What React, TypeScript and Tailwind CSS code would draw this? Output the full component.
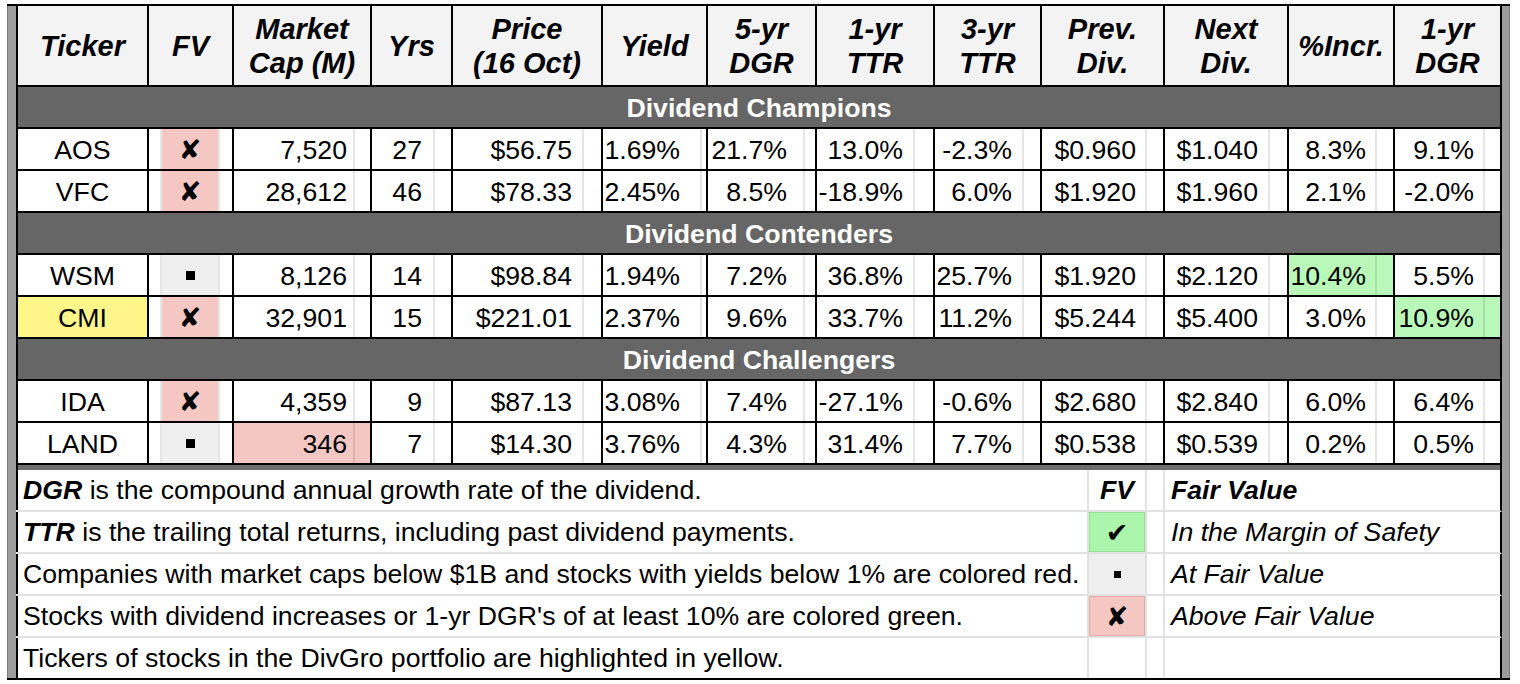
import React from "react";

type Tone = "pink" | "gray" | "green" | "yellow" | "none";

const TONE: Record<Tone, string> = {
  pink: "bg-[#f4c7c3]",
  gray: "bg-[#efefef]",
  green: "bg-[#b9f8b9]",
  yellow: "bg-[#fff68a]",
  none: "bg-white",
};

const GRID =
  "grid grid-cols-[131px_85px_138px_81px_150px_105px_109px_118px_107px_123px_124px_106px_107px]";

const HEADERS: string[][] = [
  ["Ticker"],
  ["FV"],
  ["Market", "Cap (M)"],
  ["Yrs"],
  ["Price", "(16 Oct)"],
  ["Yield"],
  ["5-yr", "DGR"],
  ["1-yr", "TTR"],
  ["3-yr", "TTR"],
  ["Prev.", "Div."],
  ["Next", "Div."],
  ["%Incr."],
  ["1-yr", "DGR"],
];

// trailing grid column + text padding for each number column
const NUM = [
  { tail: "w-[15px]", pr: "pr-[6px]" },
  { tail: "w-[16px]", pr: "pr-[11px]" },
  { tail: "w-[17px]", pr: "pr-[10px]" },
  { tail: "w-[4px]", pr: "pr-[20px]" },
  { tail: "w-[10px]", pr: "pr-[16px]" },
  { tail: "w-[18px]", pr: "pr-[10px]" },
  { tail: "w-[16px]", pr: "pr-[10px]" },
  { tail: "w-[16px]", pr: "pr-[9px]" },
  { tail: "w-[17px]", pr: "pr-[10px]" },
  { tail: "w-[16px]", pr: "pr-[9px]" },
  { tail: "w-[15px]", pr: "pr-[9px]" },
];

type Fv = "x" | "sq" | "check";

type Stock = {
  ticker: string;
  yellow?: boolean;
  fv: Fv;
  values: string[];
  tones?: Record<number, Tone>;
};

const SECTIONS: { title: string; rows: Stock[] }[] = [
  {
    title: "Dividend Champions",
    rows: [
      {
        ticker: "AOS",
        fv: "x",
        values: ["7,520", "27", "$56.75", "1.69%", "21.7%", "13.0%", "-2.3%", "$0.960", "$1.040", "8.3%", "9.1%"],
      },
      {
        ticker: "VFC",
        fv: "x",
        values: ["28,612", "46", "$78.33", "2.45%", "8.5%", "-18.9%", "6.0%", "$1.920", "$1.960", "2.1%", "-2.0%"],
      },
    ],
  },
  {
    title: "Dividend Contenders",
    rows: [
      {
        ticker: "WSM",
        fv: "sq",
        values: ["8,126", "14", "$98.84", "1.94%", "7.2%", "36.8%", "25.7%", "$1.920", "$2.120", "10.4%", "5.5%"],
        tones: { 9: "green" },
      },
      {
        ticker: "CMI",
        yellow: true,
        fv: "x",
        values: ["32,901", "15", "$221.01", "2.37%", "9.6%", "33.7%", "11.2%", "$5.244", "$5.400", "3.0%", "10.9%"],
        tones: { 10: "green" },
      },
    ],
  },
  {
    title: "Dividend Challengers",
    rows: [
      {
        ticker: "IDA",
        fv: "x",
        values: ["4,359", "9", "$87.13", "3.08%", "7.4%", "-27.1%", "-0.6%", "$2.680", "$2.840", "6.0%", "6.4%"],
      },
      {
        ticker: "LAND",
        fv: "sq",
        values: ["346", "7", "$14.30", "3.76%", "4.3%", "31.4%", "7.7%", "$0.538", "$0.539", "0.2%", "0.5%"],
        tones: { 0: "pink" },
      },
    ],
  },
];

function Mark({ kind, small }: { kind: Fv; small?: boolean }) {
  if (kind === "sq")
    return <span className={small ? "inline-block w-[7px] h-[7px] bg-black" : "inline-block w-[9px] h-[9px] bg-black"} />;
  return (
    <span className="font-['DejaVu_Sans',sans-serif] text-[27px] leading-none text-black">
      {kind === "x" ? "\u2718" : "\u2714"}
    </span>
  );
}

function Gridline() {
  return <div className="w-[2px] h-full bg-black/10" />;
}

function DataRow({ row }: { row: Stock }) {
  const fvTone: Tone = row.fv === "x" ? "pink" : "gray";
  return (
    <div className={`${GRID} h-[42px] border-r-2 border-b-2 border-black`}>
      <div
        className={`border-l-2 border-black flex items-center justify-center pt-[2px] ${row.yellow ? TONE.yellow : ""}`}
      >
        {row.ticker}
      </div>
      <div className="border-l-2 border-black flex">
        <div className="w-[11px]" />
        <Gridline />
        <div className={`w-[56px] flex items-center justify-center ${TONE[fvTone]}`}>
          <Mark kind={row.fv} />
        </div>
        <Gridline />
        <div className="flex-1" />
      </div>
      {row.values.map((v, i) => {
        const tone = row.tones?.[i] ?? "none";
        return (
          <div key={i} className={`border-l-2 border-black flex ${TONE[tone]}`}>
            <div className={`flex-1 flex items-center justify-end pt-[2px] ${NUM[i].pr}`}>{v}</div>
            <Gridline />
            <div className={NUM[i].tail} />
          </div>
        );
      })}
    </div>
  );
}

function Band({ title }: { title: string }) {
  return (
    <div className="h-[42px] pt-[2px] border-x-2 border-b-2 border-black bg-[#666666] flex items-center justify-center font-bold text-white">
      {title}
    </div>
  );
}

const NOTES = [
  {
    left: (
      <span>
        <b className="italic">DGR</b> is the compound annual growth rate of the dividend.
      </span>
    ),
    fv: "head",
    desc: "Fair Value",
  },
  {
    left: (
      <span>
        <b className="italic">TTR</b> is the trailing total returns, including past dividend payments.
      </span>
    ),
    fv: "check",
    desc: "In the Margin of Safety",
  },
  {
    left: <span>Companies with market caps below $1B and stocks with yields below 1% are colored red.</span>,
    fv: "sq",
    desc: "At Fair Value",
  },
  {
    left: <span>Stocks with dividend increases or 1-yr DGR's of at least 10% are colored green.</span>,
    fv: "x",
    desc: "Above Fair Value",
  },
  {
    left: <span>Tickers of stocks in the DivGro portfolio are highlighted in yellow.</span>,
    fv: "",
    desc: "",
  },
];

function NoteFv({ fv }: { fv: string }) {
  if (fv === "head") return <b className="italic">FV</b>;
  if (fv === "check")
    return (
      <div className="w-full h-full bg-[#abf6ab] border border-[#93e293] flex items-center justify-center">
        <Mark kind="check" />
      </div>
    );
  if (fv === "sq")
    return (
      <div className="w-full h-full bg-[#efefef] flex items-center justify-center">
        <Mark kind="sq" small />
      </div>
    );
  if (fv === "x")
    return (
      <div className="w-full h-full bg-[#f4c7c3] border border-[#e2a9a5] flex items-center justify-center">
        <Mark kind="x" />
      </div>
    );
  return null;
}

export default function App() {
  return (
    <div className="w-[1520px] h-[684px] bg-white pt-[4px] pl-[7px] font-['Liberation_Sans',Arial,sans-serif] text-[26.67px] leading-none text-black overflow-hidden">
      <div className="w-[1503px] flex border-y-2 border-black">
        <div className="w-[9px] bg-[#9c9c9c] border-l border-[#7a7a7a]" />
        <div className="w-[1486px]">
          {/* header */}
          <div className={`${GRID} h-[81px] border-r-2 border-b-2 border-black bg-[#f3f3f3]`}>
            {HEADERS.map((lines, i) => (
              <div
                key={i}
                className="border-l-2 border-black flex flex-col items-center justify-center font-bold italic text-[29px] leading-[34px] text-center"
              >
                {lines.map((l) => (
                  <span key={l}>{l}</span>
                ))}
              </div>
            ))}
          </div>

          {SECTIONS.map((s) => (
            <div key={s.title}>
              <Band title={s.title} />
              {s.rows.map((r) => (
                <DataRow key={r.ticker} row={r} />
              ))}
            </div>
          ))}

          <div className="h-[5px] bg-[#6e6e6e] border-x-2 border-black" />

          {/* notes */}
          {NOTES.map((n, i) => (
            <div
              key={i}
              className={`grid grid-cols-[1071px_58px_18px_337px] border-r-2 border-black ${
                i < NOTES.length - 1 ? "h-[42px] border-b-2 border-b-[#e2e2e2]" : "h-[40px]"
              }`}
            >
              <div className="border-l-2 border-black flex items-center pl-[5px] pt-[1px] whitespace-nowrap">
                {n.left}
              </div>
              <div className="border-l-2 border-[#e2e2e2] flex items-center justify-center">
                <NoteFv fv={n.fv} />
              </div>
              <div className="border-l-2 border-[#e2e2e2]" />
              <div
                className={`border-l-2 border-[#e2e2e2] flex items-center pl-[6px] pt-[1px] italic ${
                  n.fv === "head" ? "font-bold" : ""
                }`}
              >
                {n.desc}
              </div>
            </div>
          ))}
        </div>
        <div className="w-[8px] bg-[#9c9c9c] border-r border-[#7a7a7a]" />
      </div>
    </div>
  );
}
